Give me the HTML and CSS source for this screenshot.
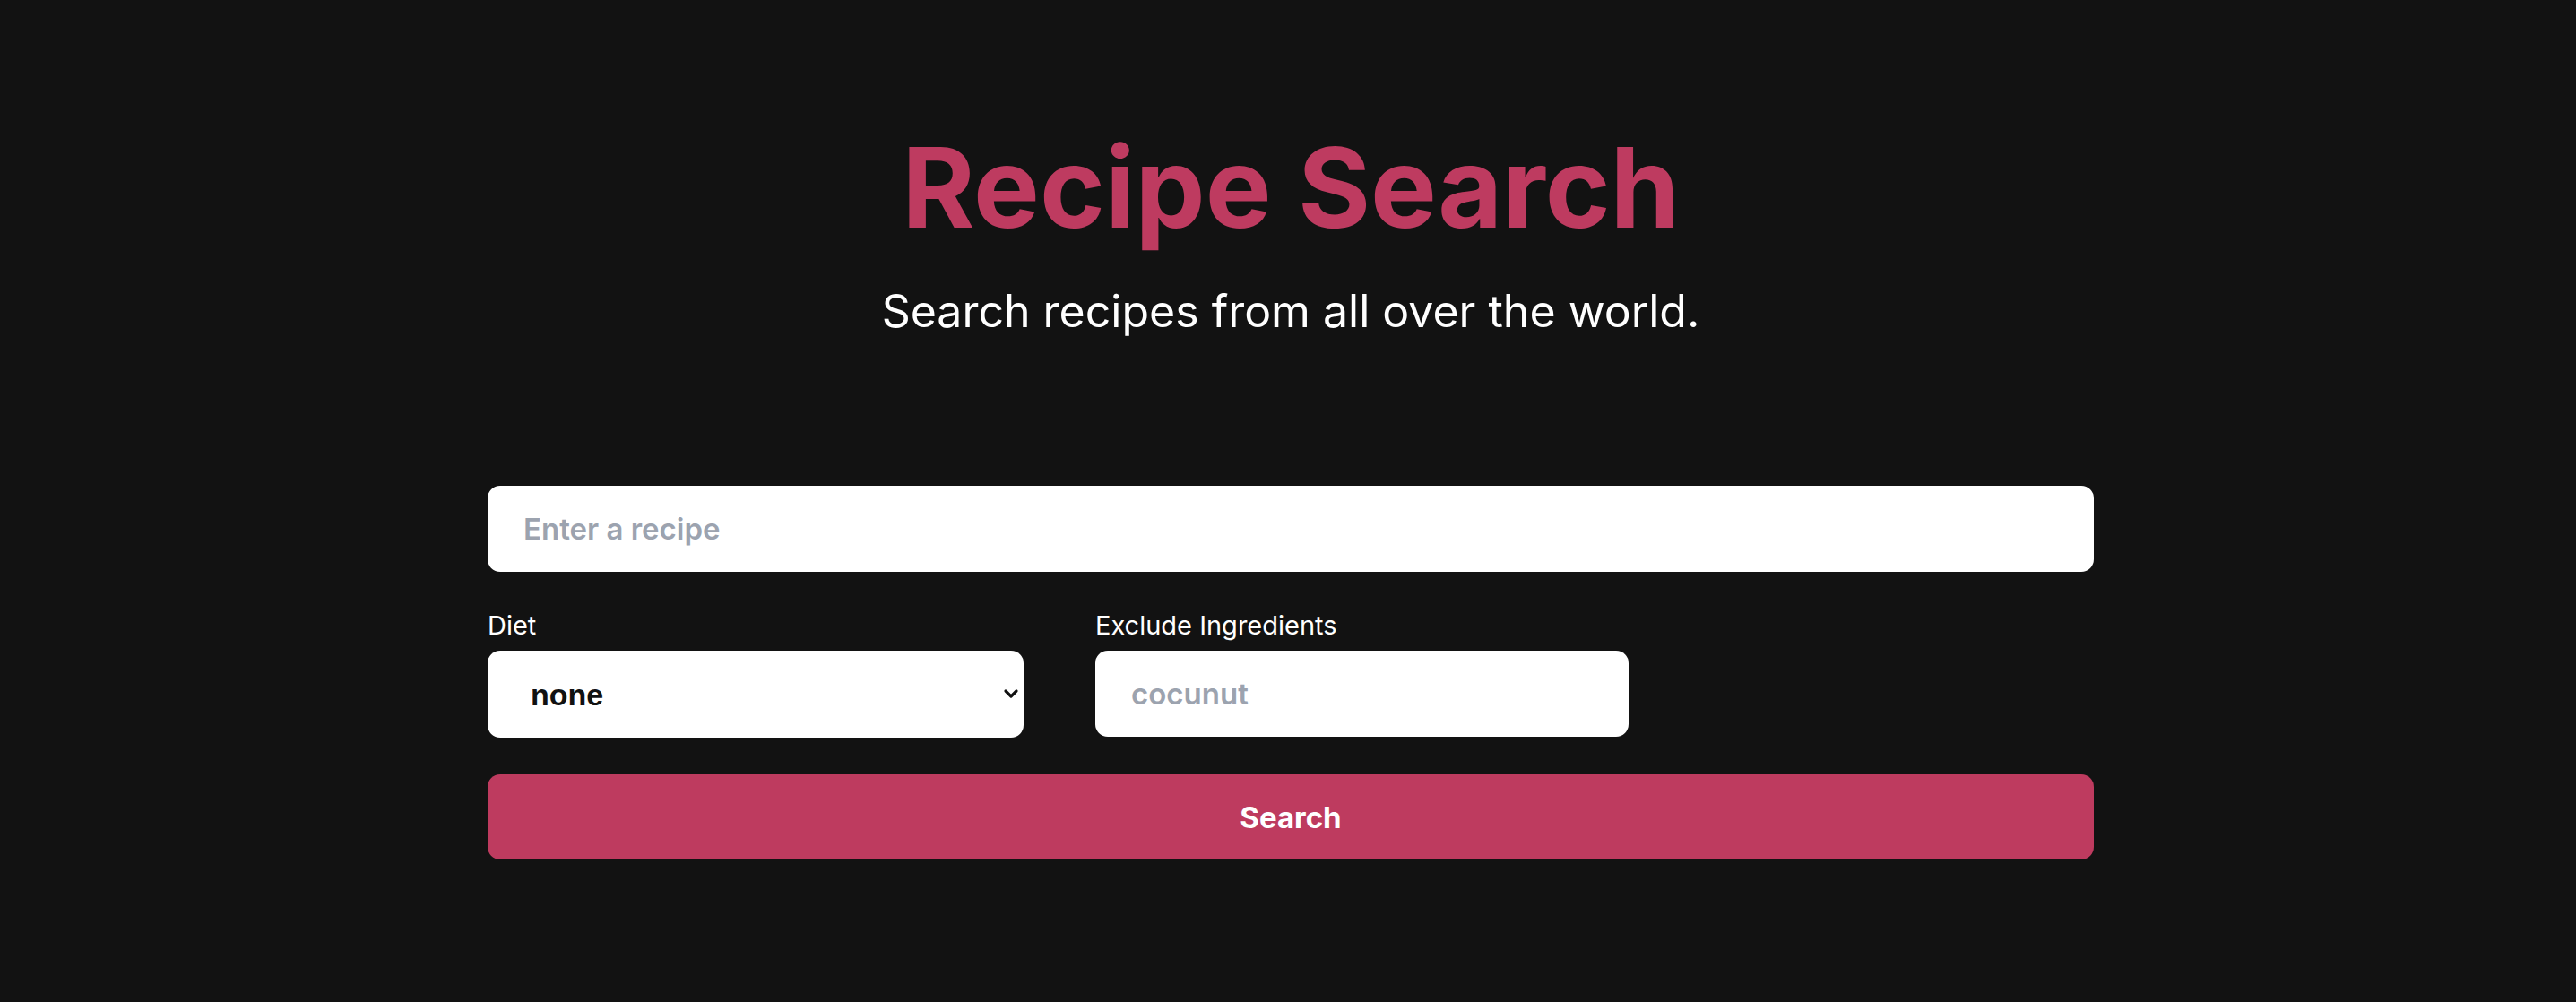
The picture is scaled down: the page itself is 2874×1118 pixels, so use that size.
FILE: index.html
```html
<!DOCTYPE html>
<html lang="en">
<head>
<meta charset="utf-8">
<title>Recipe Search</title>
<link rel="stylesheet" href="styles.css">
</head>
<body>
<main class="page">
  <header class="hero">
    <h1 class="title">Recipe Search</h1>
    <p class="subtitle">Search recipes from all over the world.</p>
  </header>
  <form class="search-form">
    <input class="field recipe-field" type="text" placeholder="Enter a recipe">
    <div class="filters">
      <div class="filter">
        <label class="label">Diet</label>
        <div class="select-wrap">
          <select class="field select">
            <option>none</option>
          </select>
          <svg class="chevron" width="18" height="12" viewBox="0 0 18 12"><path d="M3 3 L9 9 L15 3" fill="none" stroke="#111" stroke-width="3.2" stroke-linecap="round" stroke-linejoin="round"/></svg>
        </div>
      </div>
      <div class="filter">
        <label class="label">Exclude Ingredients</label>
        <input class="field exclude-field" type="text" placeholder="cocunut">
      </div>
    </div>
    <button class="submit" type="button">Search</button>
  </form>
</main>
</body>
</html>
```
FILE: styles.css
```css
html, body {
  margin: 0;
  padding: 0;
  background: #121212;
}
body {
  font-family: Inter, "Open Sans", sans-serif;
  color: #fff;
  min-height: 1118px;
  padding-left: 6px;
}
.page {
  width: 1792px;
  margin: 0 auto;
  padding-top: 147px;
}
.hero {
  display: flex;
  flex-direction: column;
  align-items: center;
}
.title {
  margin: 0;
  font-size: 124px;
  line-height: 124px;
  font-weight: 700;
  color: #be3b60;
}
.subtitle {
  margin: 52px 0 0;
  font-size: 50px;
  line-height: 48px;
  font-weight: 400;
  color: #fff;
}
.search-form {
  margin-top: 171px;
  display: flex;
  flex-direction: column;
}
.field {
  box-sizing: border-box;
  height: 96px;
  border: none;
  border-radius: 14px;
  background: #fff;
  outline: none;
  font-family: Inter, sans-serif;
  font-weight: 600;
  font-size: 33px;
  color: #111;
}
.field::placeholder {
  color: #9ca3af;
}
.recipe-field {
  width: 100%;
  padding: 0 40px;
}
.filters {
  display: flex;
  gap: 80px;
  margin-top: 46px;
}
.filter {
  display: flex;
  flex-direction: column;
  gap: 14px;
}
.label {
  font-size: 29px;
  line-height: 28px;
  font-weight: 400;
  color: #fff;
}
.select-wrap {
  position: relative;
  width: 598px;
}
.select {
  appearance: none;
  -webkit-appearance: none;
  width: 100%;
  height: 97px;
  padding: 0 48px;
  font-family: "Liberation Sans", Arial, sans-serif;
  font-weight: 700;
  font-size: 34px;
  color: #111;
}
.chevron {
  position: absolute;
  right: 5px;
  top: 42px;
  pointer-events: none;
}
.exclude-field {
  width: 595px;
  padding: 0 40px;
}
.submit {
  margin-top: 41px;
  height: 95px;
  width: 100%;
  border: none;
  border-radius: 14px;
  background: #be3b5f;
  color: #fff;
  font-family: Inter, sans-serif;
  font-weight: 700;
  font-size: 33px;
}
```
